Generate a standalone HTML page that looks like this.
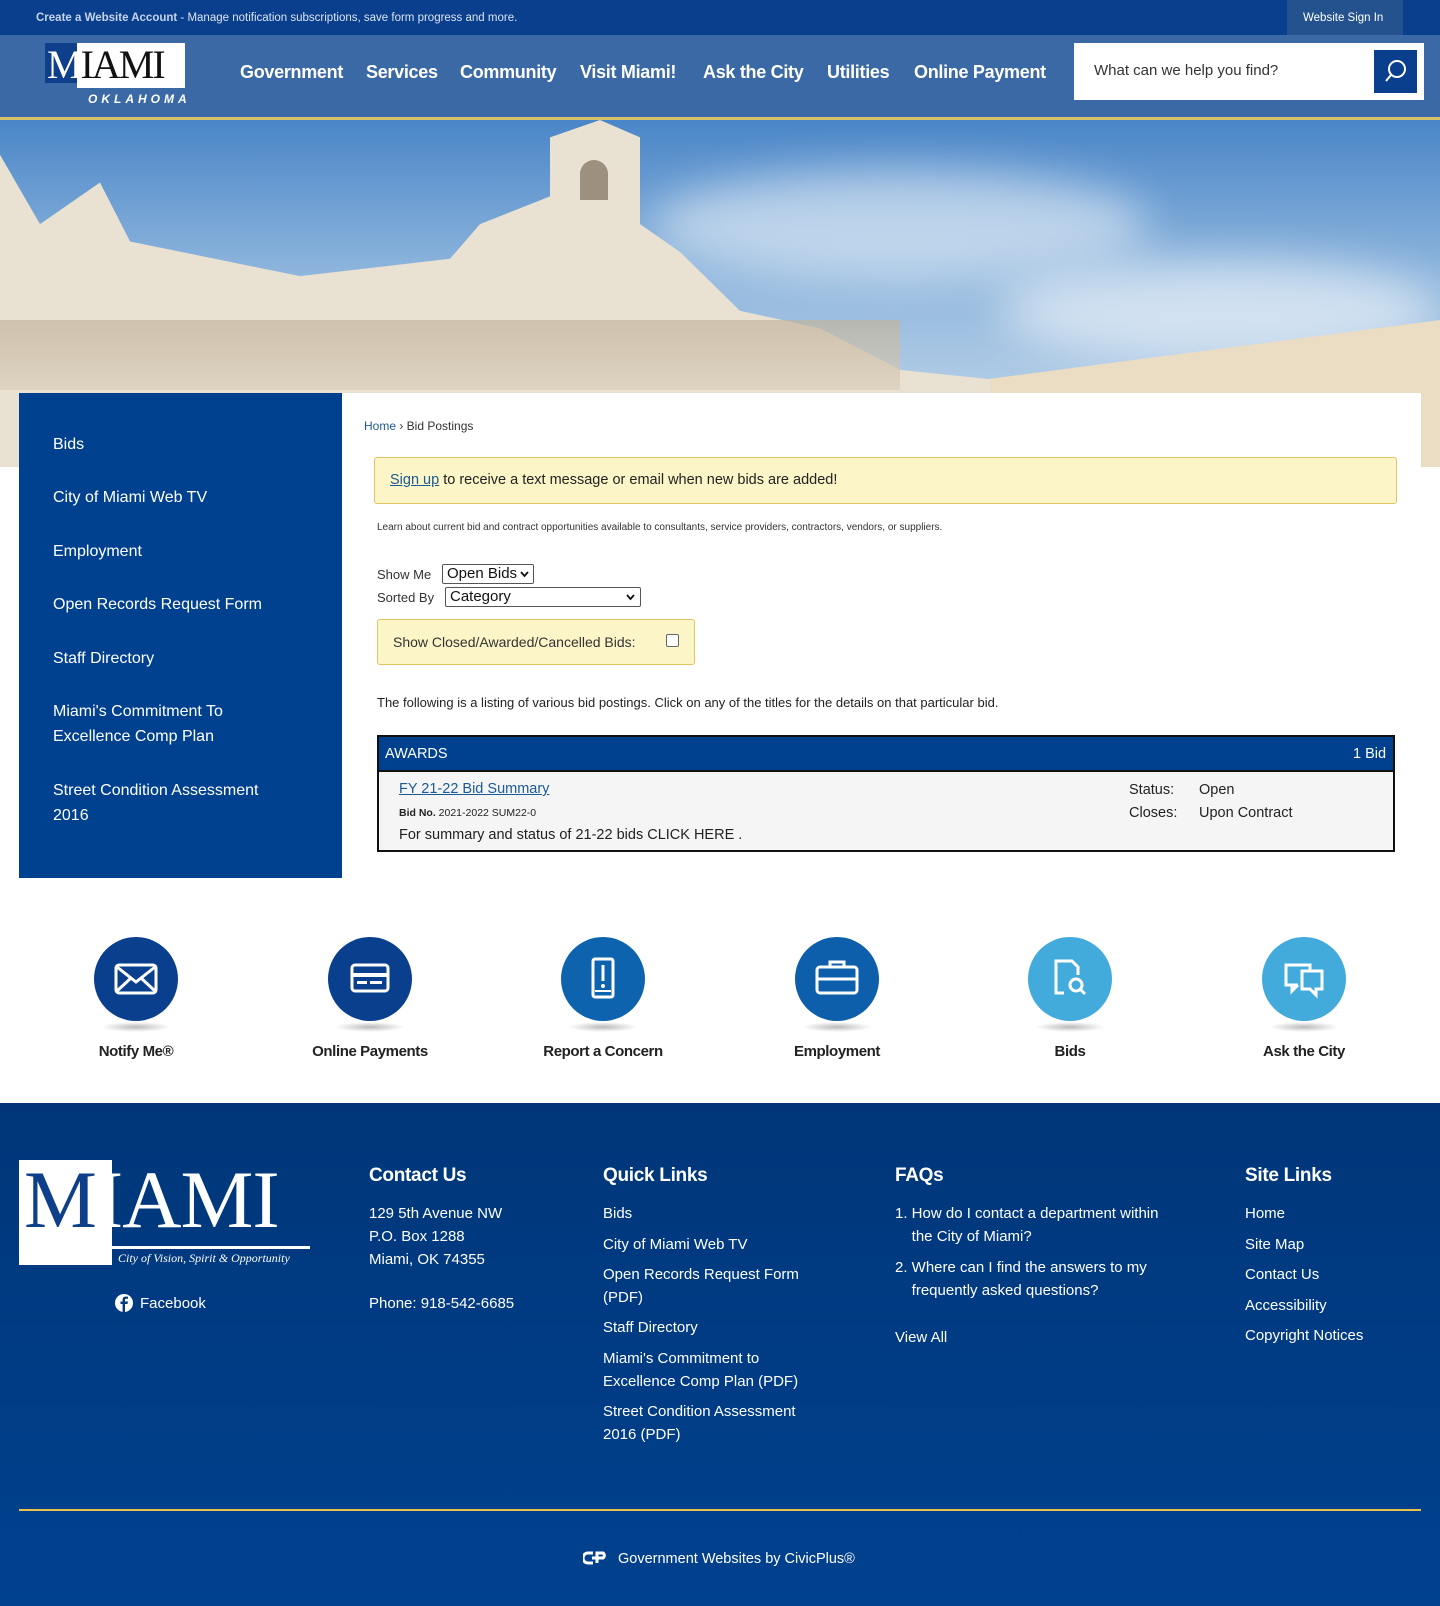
<!DOCTYPE html>
<html><head><meta charset="utf-8"><style>
*{margin:0;padding:0;box-sizing:border-box}
body{width:1440px;height:1606px;position:relative;font-family:"Liberation Sans",sans-serif;background:#fff;overflow:hidden}
.a{position:absolute}
.w{color:#fff}
.nav{font-weight:bold;font-size:18px;color:#fff;top:62px;letter-spacing:-0.3px}
.sb{left:53px;font-size:16px;color:#fff;line-height:25px}
.ic{width:84px;height:84px;border-radius:50%;top:937px}
.sh{width:70px;height:10px;border-radius:50%;top:1022px;background:radial-gradient(ellipse,#bbb,rgba(255,255,255,0) 70%)}
.lb{top:1043px;font-weight:bold;font-size:15px;color:#222;width:200px;text-align:center;letter-spacing:-0.4px}
.fh{font-weight:bold;font-size:19px;color:#fff;top:1165px;letter-spacing:-0.3px}
.fl{font-size:15px;color:#fff;line-height:23px}
</style></head><body>
<div class="a" style="left:0;top:0;width:1440px;height:35px;background:#0a3f8e"></div>
<div class="a w" style="left:36px;top:12px;font-size:11.5px;color:#dbe4f0"><b style="color:#c5d3e8">Create a Website Account</b> - Manage notification subscriptions, save form progress and more.</div>
<div class="a" style="left:1287px;top:0;width:116px;height:35px;background:#23528f"></div>
<div class="a w" style="left:1303px;top:12px;font-size:11.5px">Website Sign In</div>
<div class="a" style="left:0;top:35px;width:1440px;height:83px;background:#3b69a6"></div>
<div class="a" style="left:0;top:117px;width:1440px;height:3px;background:#d6c266"></div>
<!-- logo -->
<div class="a" style="left:45px;top:43px;width:140px;height:64px">
<div class="a" style="left:0;top:0;width:32px;height:40px;background:#0e3f8a"></div>
<div class="a" style="left:32px;top:0;width:108px;height:45px;background:#fff"></div>
<div class="a" style="left:2px;top:0;font-family:'Liberation Serif',serif;font-size:40px;line-height:44px;color:#fff;letter-spacing:-2px">M<span style="color:#111">IAMI</span></div>
<div class="a" style="left:43px;top:49px;font-size:12px;font-weight:bold;font-style:italic;color:#fff;letter-spacing:4px">OKLAHOMA</div>
</div>
<div class="a nav" style="left:240px">Government</div>
<div class="a nav" style="left:366px">Services</div>
<div class="a nav" style="left:460px">Community</div>
<div class="a nav" style="left:580px">Visit Miami!</div>
<div class="a nav" style="left:703px">Ask the City</div>
<div class="a nav" style="left:827px">Utilities</div>
<div class="a nav" style="left:914px">Online Payment</div>
<div class="a" style="left:1074px;top:43px;width:350px;height:57px;background:#fff"></div>
<div class="a" style="left:1094px;top:62px;font-size:15px;color:#333">What can we help you find?</div>
<div class="a" style="left:1374px;top:50px;width:43px;height:43px;background:#0a3f8e">
<svg width="43" height="43" viewBox="0 0 43 43"><circle cx="23" cy="19" r="8" fill="none" stroke="#fff" stroke-width="2"/><path d="M17 25 L12 31" stroke="#fff" stroke-width="2"/></svg></div>
<!-- hero -->
<div class="a" style="left:0;top:120px;width:1440px;height:347px;background:linear-gradient(180deg,#4a86c8 0%,#8fb6dd 45%,#c9dbec 100%)"></div>
<div class="a" style="left:650px;top:170px;width:500px;height:110px;border-radius:50%;background:rgba(255,255,255,0.5);filter:blur(22px)"></div>
<div class="a" style="left:1000px;top:260px;width:440px;height:100px;border-radius:50%;background:rgba(255,255,255,0.55);filter:blur(22px)"></div>
<div class="a" style="left:0;top:120px;width:1000px;height:347px;background:#e9e1d2;clip-path:polygon(0 10%,4% 30%,10% 18%,13% 35%,30% 45%,45% 40%,48% 30%,55% 22%,55% 5%,60% 0,64% 5%,64% 30%,68% 38%,74% 55%,82% 60%,90% 72%,100% 75%,100% 100%,0 100%)"></div>
<div class="a" style="left:990px;top:320px;width:450px;height:147px;background:#ebdcc4;clip-path:polygon(0 40%,100% 0,100% 100%,0 100%)"></div>
<div class="a" style="left:0;top:320px;width:900px;height:70px;background:linear-gradient(180deg,#c3b49e,#d9ceb9);opacity:.7"></div>
<div class="a" style="left:580px;top:160px;width:28px;height:40px;background:#6b5a48;border-radius:14px 14px 0 0;opacity:.6"></div>
<!-- sidebar -->
<div class="a" style="left:19px;top:393px;width:323px;height:485px;background:#00418f"></div>
<div class="a sb" style="top:432px">Bids</div>
<div class="a sb" style="top:485px">City of Miami Web TV</div>
<div class="a sb" style="top:539px">Employment</div>
<div class="a sb" style="top:592px">Open Records Request Form</div>
<div class="a sb" style="top:646px">Staff Directory</div>
<div class="a sb" style="top:699px">Miami's Commitment To<br>Excellence Comp Plan</div>
<div class="a sb" style="top:778px">Street Condition Assessment<br>2016</div>
<!-- content -->
<div class="a" style="left:342px;top:393px;width:1079px;height:485px;background:#fff"></div>
<div class="a" style="left:364px;top:419px;font-size:12px;color:#333"><span style="color:#1a5a96">Home</span> › Bid Postings</div>
<div class="a" style="left:374px;top:457px;width:1023px;height:47px;background:#fcf5c7;border:1px solid #e2c462;border-radius:3px"></div>
<div class="a" style="left:390px;top:472px;font-size:14.5px;color:#222"><u style="color:#1a5a96">Sign up</u> to receive a text message or email when new bids are added!</div>
<div class="a" style="left:377px;top:522px;font-size:10px;color:#333">Learn about current bid and contract opportunities available to consultants, service providers, contractors, vendors, or suppliers.</div>
<div class="a" style="left:377px;top:567px;font-size:13px;color:#333">Show Me</div>
<div class="a" style="left:442px;top:564px;width:92px;height:20px;border:1px solid #555;border-radius:2px;font-size:15px;padding-left:4px;line-height:18px;color:#111">Open Bids<svg class="a" style="right:4px;top:6px" width="9" height="7"><path d="M1 1 L4.5 5 L8 1" fill="none" stroke="#111" stroke-width="1.8"/></svg></div>
<div class="a" style="left:377px;top:590px;font-size:13px;color:#333">Sorted By</div>
<div class="a" style="left:445px;top:587px;width:196px;height:20px;border:1px solid #555;border-radius:2px;font-size:15px;padding-left:4px;line-height:18px;color:#111">Category<svg class="a" style="right:5px;top:6px" width="9" height="7"><path d="M1 1 L4.5 5 L8 1" fill="none" stroke="#111" stroke-width="1.8"/></svg></div>
<div class="a" style="left:377px;top:619px;width:318px;height:46px;background:#fcf5c7;border:1px solid #e2c462;border-radius:3px"></div>
<div class="a" style="left:393px;top:634px;font-size:14px;color:#333">Show Closed/Awarded/Cancelled Bids:</div>
<div class="a" style="left:666px;top:634px;width:13px;height:13px;border:1px solid #666;border-radius:2px;background:#fff"></div>
<div class="a" style="left:377px;top:695px;font-size:13px;color:#222">The following is a listing of various bid postings. Click on any of the titles for the details on that particular bid.</div>
<div class="a" style="left:377px;top:735px;width:1018px;height:117px;border:2px solid #111;background:#f5f5f5"></div>
<div class="a" style="left:379px;top:737px;width:1014px;height:35px;background:#00418f;border-bottom:2px solid #111"></div>
<div class="a w" style="left:385px;top:746px;font-size:14.5px">AWARDS</div>
<div class="a w" style="left:1353px;top:746px;font-size:14.5px">1 Bid</div>
<div class="a" style="left:399px;top:781px;font-size:14.5px;color:#1a5a96;text-decoration:underline">FY 21-22 Bid Summary</div>
<div class="a" style="left:399px;top:807px;font-size:10.5px;color:#222"><b>Bid No.</b> 2021-2022 SUM22-0</div>
<div class="a" style="left:399px;top:827px;font-size:14.5px;color:#222">For summary and status of 21-22 bids CLICK HERE .</div>
<div class="a" style="left:1129px;top:779px;font-size:14.5px;color:#222;line-height:23px">Status:<br>Closes:</div>
<div class="a" style="left:1199px;top:779px;font-size:14.5px;color:#222;line-height:23px">Open<br>Upon Contract</div>
<!-- icons -->
<div class="a ic" style="left:94px;background:#0a3f8e"><svg width="84" height="84"><rect x="22" y="28" width="40" height="28" rx="3" fill="none" stroke="#fff" stroke-width="3"/><path d="M23 30 L42 45 L61 30 M23 54 L37 41 M61 54 L47 41" fill="none" stroke="#fff" stroke-width="3"/></svg></div>
<div class="a ic" style="left:328px;background:#0a3f8e"><svg width="84" height="84"><rect x="24" y="28" width="36" height="26" rx="3" fill="none" stroke="#fff" stroke-width="3"/><rect x="24" y="36" width="36" height="4" fill="#fff"/><rect x="29" y="44" width="10" height="3" fill="#fff"/><rect x="42" y="44" width="12" height="3" fill="#fff"/></svg></div>
<div class="a ic" style="left:561px;background:#0d63ae"><svg width="84" height="84"><rect x="32" y="22" width="20" height="38" rx="2" fill="none" stroke="#fff" stroke-width="3"/><path d="M42 28 V44" stroke="#fff" stroke-width="3"/><circle cx="42" cy="49" r="2" fill="#fff"/><path d="M34 54 H50" stroke="#fff" stroke-width="2"/></svg></div>
<div class="a ic" style="left:795px;background:#0d5fab"><svg width="84" height="84"><rect x="22" y="30" width="40" height="26" rx="3" fill="none" stroke="#fff" stroke-width="3"/><path d="M35 30 V25 H49 V30 M22 42 H62" fill="none" stroke="#fff" stroke-width="3"/></svg></div>
<div class="a ic" style="left:1028px;background:#42abdc"><svg width="84" height="84"><path d="M36 56 H28 V24 H44 L50 30 V38" fill="none" stroke="#fff" stroke-width="3"/><circle cx="48" cy="48" r="6" fill="none" stroke="#fff" stroke-width="3"/><path d="M52 52 L57 57" stroke="#fff" stroke-width="3"/></svg></div>
<div class="a ic" style="left:1262px;background:#42abdc"><svg width="84" height="84"><path d="M36 48 H24 V28 H48 V34 M30 48 V54 L36 48" fill="none" stroke="#fff" stroke-width="3"/><path d="M40 34 H60 V52 H54 V58 L48 52 H40 Z" fill="none" stroke="#fff" stroke-width="3"/></svg></div>
<div class="a sh" style="left:101px"></div><div class="a sh" style="left:335px"></div><div class="a sh" style="left:568px"></div><div class="a sh" style="left:802px"></div><div class="a sh" style="left:1035px"></div><div class="a sh" style="left:1269px"></div>
<div class="a lb" style="left:36px">Notify Me®</div>
<div class="a lb" style="left:270px">Online Payments</div>
<div class="a lb" style="left:503px">Report a Concern</div>
<div class="a lb" style="left:737px">Employment</div>
<div class="a lb" style="left:970px">Bids</div>
<div class="a lb" style="left:1204px">Ask the City</div>
<!-- footer -->
<div class="a" style="left:0;top:1103px;width:1440px;height:503px;background:linear-gradient(180deg,#003679,#00418f)"></div>
<div class="a" style="left:19px;top:1160px;width:93px;height:105px;background:#fff"></div>
<div class="a" style="left:112px;top:1246px;width:198px;height:3px;background:#fff"></div>
<div class="a" style="left:24px;top:1152px;font-family:'Liberation Serif',serif;font-size:82px;color:#fff;letter-spacing:-1px;line-height:96px"><span style="color:#0e3f8a">M</span>IAMI</div>
<div class="a" style="left:118px;top:1251px;font-family:'Liberation Serif',serif;font-style:italic;font-size:12px;color:#fff">City of Vision, Spirit &amp; Opportunity</div>
<svg class="a" style="left:115px;top:1294px" width="18" height="18"><circle cx="9" cy="9" r="9" fill="#fff"/><path d="M10 18 V10 H12.5 L13 7.5 H10 V6 C10 5 10.5 4.8 11.2 4.8 H13 V2.6 H10.5 C8.3 2.6 7.6 4 7.6 5.6 V7.5 H5.5 V10 H7.6 V18Z" fill="#003b80"/></svg>
<div class="a fl" style="left:140px;top:1292px">Facebook</div>
<div class="a fh" style="left:369px">Contact Us</div>
<div class="a fl" style="left:369px;top:1202px">129 5th Avenue NW<br>P.O. Box 1288<br>Miami, OK 74355</div>
<div class="a fl" style="left:369px;top:1292px">Phone: 918-542-6685</div>
<div class="a fh" style="left:603px">Quick Links</div>
<div class="a fl" style="left:603px;top:1202px">Bids</div>
<div class="a fl" style="left:603px;top:1233px">City of Miami Web TV</div>
<div class="a fl" style="left:603px;top:1263px">Open Records Request Form<br>(PDF)</div>
<div class="a fl" style="left:603px;top:1316px">Staff Directory</div>
<div class="a fl" style="left:603px;top:1347px">Miami's Commitment to<br>Excellence Comp Plan (PDF)</div>
<div class="a fl" style="left:603px;top:1400px">Street Condition Assessment<br>2016 (PDF)</div>
<div class="a fh" style="left:895px">FAQs</div>
<div class="a fl" style="left:895px;top:1202px">1. How do I contact a department within<br>&nbsp;&nbsp;&nbsp;&nbsp;the City of Miami?</div>
<div class="a fl" style="left:895px;top:1256px">2. Where can I find the answers to my<br>&nbsp;&nbsp;&nbsp;&nbsp;frequently asked questions?</div>
<div class="a fl" style="left:895px;top:1326px">View All</div>
<div class="a fh" style="left:1245px">Site Links</div>
<div class="a fl" style="left:1245px;top:1202px">Home</div>
<div class="a fl" style="left:1245px;top:1233px">Site Map</div>
<div class="a fl" style="left:1245px;top:1263px">Contact Us</div>
<div class="a fl" style="left:1245px;top:1294px">Accessibility</div>
<div class="a fl" style="left:1245px;top:1324px">Copyright Notices</div>
<div class="a" style="left:19px;top:1509px;width:1402px;height:2px;background:#e8c24a"></div>
<svg class="a" style="left:583px;top:1550px" width="26" height="16"><path d="M10 3 H5 A5 5 0 0 0 5 13 H10 M9 8 H20 A3 3 0 0 0 20 3 H14 V13" fill="none" stroke="#fff" stroke-width="3"/></svg>
<div class="a fl" style="left:618px;top:1548px;font-size:14.5px">Government Websites by CivicPlus®</div>
</body></html>
